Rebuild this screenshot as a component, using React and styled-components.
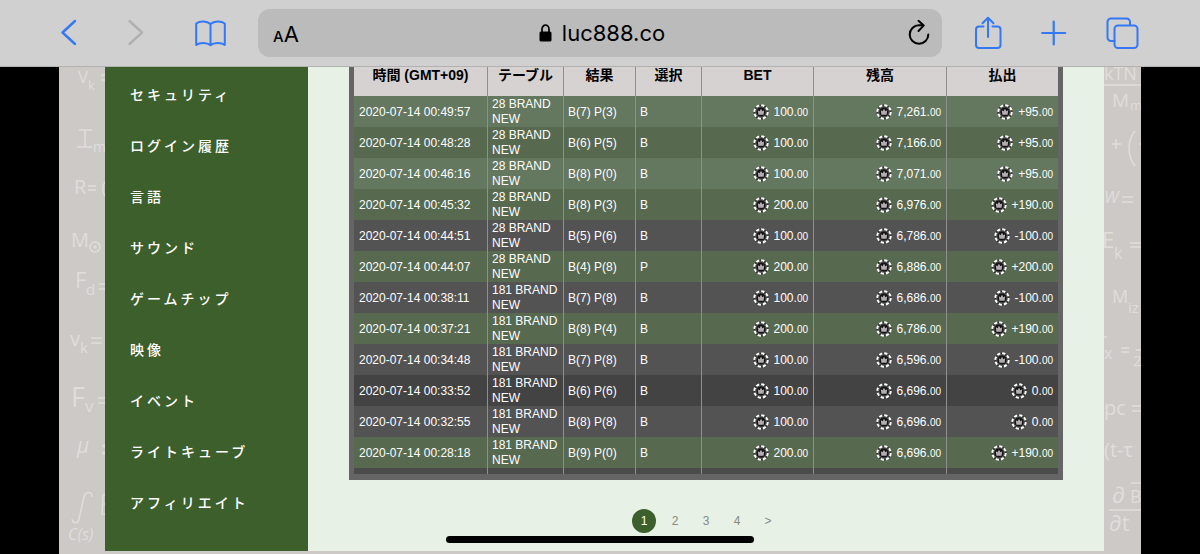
import styled, { createGlobalStyle } from "styled-components";

const menu = [
  "セキュリティ",
  "ログイン履歴",
  "言語",
  "サウンド",
  "ゲームチップ",
  "映像",
  "イベント",
  "ライトキューブ",
  "アフィリエイト",
];

const columns = [
  { title: "時間 (GMT+09)", width: 134 },
  { title: "テーブル", width: 76 },
  { title: "結果", width: 72 },
  { title: "選択", width: 66 },
  { title: "BET", width: 112 },
  { title: "残高", width: 133 },
  { title: "払出", width: 111 },
];

const bets = [
  ["2020-07-14 00:49:57", "28 BRAND NEW", "B(7) P(3)", "B", "100", "7,261", "+95"],
  ["2020-07-14 00:48:28", "28 BRAND NEW", "B(6) P(5)", "B", "100", "7,166", "+95"],
  ["2020-07-14 00:46:16", "28 BRAND NEW", "B(8) P(0)", "B", "100", "7,071", "+95"],
  ["2020-07-14 00:45:32", "28 BRAND NEW", "B(8) P(3)", "B", "200", "6,976", "+190"],
  ["2020-07-14 00:44:51", "28 BRAND NEW", "B(5) P(6)", "B", "100", "6,786", "-100"],
  ["2020-07-14 00:44:07", "28 BRAND NEW", "B(4) P(8)", "P", "200", "6,886", "+200"],
  ["2020-07-14 00:38:11", "181 BRAND NEW", "B(7) P(8)", "B", "100", "6,686", "-100"],
  ["2020-07-14 00:37:21", "181 BRAND NEW", "B(8) P(4)", "B", "200", "6,786", "+190"],
  ["2020-07-14 00:34:48", "181 BRAND NEW", "B(7) P(8)", "B", "100", "6,596", "-100"],
  ["2020-07-14 00:33:52", "181 BRAND NEW", "B(6) P(6)", "B", "100", "6,696", "0"],
  ["2020-07-14 00:32:55", "181 BRAND NEW", "B(8) P(8)", "B", "100", "6,696", "0"],
  ["2020-07-14 00:28:18", "181 BRAND NEW", "B(9) P(0)", "B", "200", "6,696", "+190"],
];

const pages = ["1", "2", "3", "4", ">"];

function Chip() {
  return (
    <svg width="16" height="16" viewBox="0 0 16 16" aria-hidden="true">
      <circle cx="8" cy="8" r="7.6" fill="#353a33" />
      <circle
        cx="8"
        cy="8"
        r="6.7"
        fill="none"
        stroke="#fff"
        strokeWidth="2"
        strokeDasharray="3.3 1.96"
      />
      <circle cx="8" cy="8" r="5.1" fill="#141414" stroke="#8e8e8e" strokeWidth="0.5" />
      <path
        d="M4.8 6.2l1.8 1L8 4.8l1.4 2.4 1.8-1-.6 4.600H5.400z"
        fill="#b3adb2"
      />
    </svg>
  );
}

function Money({ value }) {
  return (
    <Amount>
      <Chip />
      <span>
        {value}.<Cents>00</Cents>
      </span>
    </Amount>
  );
}

function Toolbar() {
  return (
    <StyledToolbar>
      <Tools $gap={37}>
        <ToolButton aria-label="戻る">
          <svg viewBox="0 0 34 34">
            <path d="M23 5L10.500 16.500 23 28" strokeWidth="2.400" />
          </svg>
        </ToolButton>
        <ToolButton aria-label="進む" disabled>
          <svg viewBox="0 0 34 34">
            <path d="M6.500 5L19 16.500 6.500 28" strokeWidth="2.400" />
          </svg>
        </ToolButton>
        <ToolButton aria-label="ブックマーク">
          <svg viewBox="0 0 34 34">
            <path d="M16.500 8C13 4.800 6 4.600 2.200 7.500V29C6 26.300 13 26.400 16.500 29.300C20 26.400 27 26.300 30.800 29V7.500C27 4.600 20 4.800 16.500 8zM16.500 8V29" />
          </svg>
        </ToolButton>
      </Tools>
      <AddressBar>
        <TextSize aria-label="表示設定">
          <small>A</small>A
        </TextSize>
        <Address>
          <svg width="13" height="18" viewBox="0 0 13 18" aria-hidden="true">
            <path
              d="M3 8V5.200a3.500 4 0 0 1 7 0V8"
              fill="none"
              stroke="#000"
              strokeWidth="1.700"
            />
            <rect x="0.500" y="7.500" width="12" height="10" rx="1.500" />
          </svg>
          luc888.co
        </Address>
        <Reload aria-label="再読み込み">
          <svg width="24" height="28" viewBox="0 0 24 28">
            <path d="M21.300 15.500A9.300 9.300 0 1 1 12 6.200H16.500M11.500 1.800L16.800 6.400 11.500 12" />
          </svg>
        </Reload>
      </AddressBar>
      <Tools $gap={33}>
        <ToolButton aria-label="共有">
          <svg viewBox="0 0 34 34">
            <path d="M11.500 10.500H7a3 3 0 0 0-3 3V29a3 3 0 0 0 3 3H25.500a3 3 0 0 0 3-3V13.500a3 3 0 0 0-3-3H20.500M16 21V2M10.500 7.200L16 1.700 21.500 7.200" />
          </svg>
        </ToolButton>
        <ToolButton aria-label="新規タブ">
          <svg viewBox="0 0 34 34">
            <path d="M14.700 5.500V28.500M3.200 17H26.200" strokeWidth="2.200" />
          </svg>
        </ToolButton>
        <ToolButton aria-label="タブ一覧">
          <svg viewBox="0 0 34 34">
            <path d="M8.500 25H5a3.500 3.500 0 0 1-3.500-3.500V6A3.500 3.500 0 0 1 5 2.500H20.500A3.500 3.500 0 0 1 24 6V9" />
            <rect x="8.500" y="9.500" width="23" height="22.500" rx="3.500" />
          </svg>
        </ToolButton>
      </Tools>
    </StyledToolbar>
  );
}

// chalk formulas on both edges of the page
function LeftFormulas() {
  return (
    <Formulas width="46" height="487" viewBox="0 0 46 487" aria-hidden="true">
      <text x="19" y="16" fontSize="17">V</text>
      <text x="29" y="23" fontSize="13">k</text>
      <path d="M42 8h6M42 13h6" />
      <path d="M20 63h13M26 63v17M18 80h15" />
      <text x="34" y="85" fontSize="14">m</text>
      <text x="15" y="127" fontSize="20">R</text>
      <path d="M29 119h8M29 123h8M46 115c-3 4-3 10 0 14" />
      <text x="12" y="180" fontSize="20">M</text>
      <circle cx="36" cy="180" r="5" />
      <circle cx="36" cy="180" r="1" />
      <text x="16" y="221" fontSize="22">F</text>
      <text x="27" y="228" fontSize="15">d</text>
      <path d="M40 217h8M40 222h8" />
      <text x="11" y="279" fontSize="20">v</text>
      <text x="21" y="286" fontSize="15">k</text>
      <path d="M32 271h11M32 276h11" />
      <text x="12" y="340" fontSize="27">F</text>
      <text x="26" y="345" fontSize="17">v</text>
      <path d="M39 331h9M39 336h9" />
      <text x="18" y="386" fontSize="21" fontStyle="italic">μ</text>
      <circle cx="45" cy="379" r="1" />
      <circle cx="45" cy="386" r="1" />
      <path d="M33 430c0-7-7-5-8 0l-5 22c-1 5-6 5-7 0" />
      <path d="M48 428h-4l-1 19h5M43 437h5" />
      <text x="9" y="473" fontSize="16" fontStyle="italic">C(s)</text>
    </Formulas>
  );
}

function RightFormulas() {
  return (
    <Formulas width="37" height="487" viewBox="0 0 37 487" aria-hidden="true">
      <text x="0" y="13" fontSize="18">kTN</text>
      <path d="M0 18h37" />
      <text x="8" y="40" fontSize="19">M</text>
      <text x="26" y="43" fontSize="13">m</text>
      <path d="M8 77h9M12 72v10M31 64c-8 10-8 24 0 35M35 77h4" />
      <text x="0" y="136" fontSize="17" fontStyle="italic">W</text>
      <path d="M18 130h11M18 135h11" />
      <text x="-2" y="181" fontSize="22">E</text>
      <text x="10" y="192" fontSize="16">k</text>
      <path d="M26 176h11M26 180h11" />
      <text x="8" y="236" fontSize="18">M</text>
      <text x="24" y="246" fontSize="15">iz</text>
      <path d="M0 270h3" />
      <text x="0" y="292" fontSize="16">x</text>
      <path d="M17 281h8M17 285h8M32 283h5" />
      <text x="29" y="299" fontSize="15">2</text>
      <text x="0" y="348" fontSize="20">pc</text>
      <path d="M28 339h9M28 344h9" />
      <text x="0" y="390" fontSize="20">(t-τ</text>
      <text x="8" y="436" fontSize="23">∂</text>
      <text x="26" y="436" fontSize="18">B</text>
      <path d="M27 416h10M5 443h32" />
      <text x="5" y="464" fontSize="22">∂t</text>
    </Formulas>
  );
}

function History() {
  return (
    <StyledHistory>
      <colgroup>
        {columns.map((column) => (
          <Column key={column.title} $width={column.width} />
        ))}
      </colgroup>
      <thead>
        <tr>
          {columns.map((column) => (
            <th key={column.title} scope="col">
              {column.title}
            </th>
          ))}
        </tr>
      </thead>
      <tbody>
        {bets.map(([time, table, result, choice, bet, balance, payout]) => (
          <BetRow key={time} $win={payout.startsWith("+")}>
            <td>{time}</td>
            <td>{table}</td>
            <td>{result}</td>
            <td>{choice}</td>
            <td>
              <Money value={bet} />
            </td>
            <td>
              <Money value={balance} />
            </td>
            <td>
              <Money value={payout} />
            </td>
          </BetRow>
        ))}
      </tbody>
      <tfoot>
        <tr>
          {columns.map((column) => (
            <td key={column.title} />
          ))}
        </tr>
      </tfoot>
    </StyledHistory>
  );
}

export default function App() {
  return (
    <>
      <GlobalStyle />
      <Toolbar />
      <Screen>
        <LeftFormulas />
        <Panel>
          <Sidebar>
            {menu.map((item) => (
              <MenuLink key={item} href="#">
                {item}
              </MenuLink>
            ))}
          </Sidebar>
          <Main>
            <History />
            <Pagination aria-label="ページ">
              {pages.map((page) => (
                <PageButton key={page} $active={page === "1"}>
                  {page}
                </PageButton>
              ))}
            </Pagination>
          </Main>
        </Panel>
        <RightFormulas />
      </Screen>
      <HomeIndicator />
    </>
  );
}

const GlobalStyle = createGlobalStyle`
  * {
    box-sizing: border-box;
  }
  body {
    margin: 0;
    background: #000;
    font-family: "Liberation Sans", "Noto Sans CJK JP", sans-serif;
  }
  button {
    padding: 0;
    border: 0;
    background: none;
    font: inherit;
  }
`;

const StyledToolbar = styled.header`
  display: flex;
  align-items: center;
  gap: 30px;
  height: 67px;
  padding: 0 60px 0 52px;
  background: #d0d0d0;
  border-bottom: 1px solid #b2b2b0;
`;

const Tools = styled.div`
  display: flex;
  gap: ${({ $gap }) => $gap}px;
`;

const ToolButton = styled.button`
  width: 34px;
  height: 34px;
  color: #3478f6;
  &:disabled {
    color: #b0b0b0;
  }
  svg {
    display: block;
    fill: none;
    stroke: currentColor;
    stroke-width: 2;
    stroke-linecap: round;
    stroke-linejoin: round;
  }
`;

const AddressBar = styled.div`
  flex: 1;
  display: grid;
  grid-template-columns: 1fr auto 1fr;
  align-items: center;
  height: 48px;
  padding: 0 11px 0 15px;
  border-radius: 12px;
  background: #bbb;
  font-family: Inter, "Liberation Sans", sans-serif;
`;

const TextSize = styled.button`
  justify-self: start;
  padding-top: 2px;
  color: #000;
  font-size: 22px;
  small {
    font-size: 15px;
    font-weight: 500;
  }
`;

const Address = styled.div`
  display: flex;
  align-items: center;
  gap: 10px;
  font-size: 22px;
`;

const Reload = styled.button`
  justify-self: end;
  svg {
    display: block;
    fill: none;
    stroke: #000;
    stroke-width: 2;
    stroke-linecap: round;
    stroke-linejoin: round;
  }
`;

const Screen = styled.div`
  display: flex;
  margin: 0 59px;
  background: #cdc9c7;
`;

const Formulas = styled.svg`
  flex: none;
  display: block;
  overflow: hidden;
  font-family: "Open Sans", "DejaVu Sans", sans-serif;
  font-weight: 400;
  fill: #e0dddb;
  path,
  circle {
    fill: none;
    stroke: #e0dddb;
    stroke-width: 1.5;
  }
`;

const Panel = styled.div`
  flex: 1;
  display: flex;
  margin-bottom: 3px;
  background: #e8f1e6;
`;

const Sidebar = styled.nav`
  flex: none;
  width: 203px;
  padding: 2px 0 23px 25px;
  background: #3c5f2c;
`;

const MenuLink = styled.a`
  display: block;
  color: #fff;
  font-family: "Noto Sans CJK JP", sans-serif;
  font-size: 14px;
  font-weight: 500;
  line-height: 51px;
  letter-spacing: 3px;
  text-decoration: none;
`;

const Main = styled.main`
  flex: 1;
  padding: 0 41px;
`;

const StyledHistory = styled.table`
  width: 100%;
  table-layout: fixed;
  border-collapse: separate;
  border-spacing: 0;
  border: solid #656565;
  border-width: 0 5px 6px;
  color: #fff;
  font-size: 12px;
  line-height: 15px;
  th,
  td {
    padding: 0;
    border-right: 1px solid #8f908d;
    &:last-child {
      border-right: 0;
    }
  }
  th {
    padding-bottom: 13px;
    background: #d7d2d2;
    color: #000;
    font-size: 14px;
    line-height: 16px;
  }
  td {
    padding: 1px 5px 0 4px;
  }
  td:first-child {
    padding-left: 5px;
  }
  tfoot td {
    height: 6px;
    padding: 0;
    background: #4b4b4b;
  }
`;

const Column = styled.col`
  width: ${({ $width }) => $width}px;
`;

const BetRow = styled.tr`
  height: 31px;
  background: ${({ $win }) => ($win ? "#64775f" : "#545354")};
  &:nth-child(even) {
    background: ${({ $win }) => ($win ? "#576a50" : "#434343")};
  }
`;

const Amount = styled.div`
  display: flex;
  align-items: center;
  justify-content: flex-end;
  gap: 5px;
`;

const Cents = styled.span`
  font-size: 10px;
`;

const Pagination = styled.nav`
  display: flex;
  justify-content: center;
  gap: 7px;
  margin-top: 29px;
`;

const PageButton = styled.button`
  width: 24px;
  height: 24px;
  border-radius: 50%;
  font-size: 12px;
  color: ${({ $active }) => ($active ? "#fff" : "#858b83")};
  background: ${({ $active }) => ($active ? "#3c5f2c" : "none")};
`;

const HomeIndicator = styled.div`
  position: fixed;
  bottom: 11px;
  left: 50%;
  width: 308px;
  height: 7px;
  margin-left: -154px;
  border-radius: 4px;
  background: #000;
`;
